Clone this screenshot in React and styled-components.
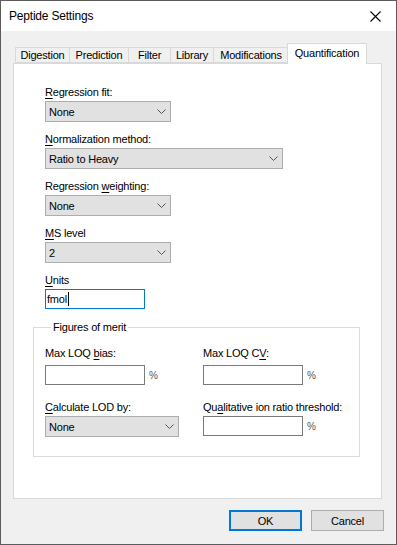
import React from 'react';
import styled, { createGlobalStyle } from 'styled-components';

const Global = createGlobalStyle`
  html, body {
    margin: 0;
    padding: 0;
    background: #ffffff;
  }
  * {
    box-sizing: border-box;
  }
`;

const Window = styled.div`
  width: 397px;
  height: 545px;
  border: 1px solid #5b5b5b;
  display: flex;
  flex-direction: column;
  font-family: 'Liberation Sans', Arial, sans-serif;
  font-size: 11px;
  letter-spacing: -0.2px;
  color: #000;
  background: #f0f0f0;
`;

const TitleBar = styled.div`
  height: 30px;
  background: #fff;
  display: flex;
  align-items: center;
  justify-content: space-between;
  padding: 0 15px 0 8px;
`;

const Title = styled.span`
  font-size: 12px;
  letter-spacing: -0.2px;
`;

const Body = styled.div`
  flex: 1;
  padding: 12px 0 0 12px;
  display: flex;
  flex-direction: column;
`;

const TabRow = styled.div`
  display: flex;
  align-items: flex-end;
  height: 20px;
  padding-left: 2px;
  position: relative;
  z-index: 1;
`;

const Tab = styled.div`
  width: ${p => p.w}px;
  height: ${p => (p.active ? 21 : 16)}px;
  margin: ${p => (p.active ? '0 -2px -1px -2px' : '0')};
  border: 1px solid #d9d9d9;
  border-left-width: ${p => (p.first || p.active ? 1 : 0)}px;
  border-bottom: ${p => (p.active ? 'none' : '1px solid #d9d9d9')};
  background: ${p => (p.active ? '#fff' : '#f0f0f0')};
  display: flex;
  align-items: ${p => (p.active ? 'flex-start' : 'center')};
  padding-top: ${p => (p.active ? 2 : 0)}px;
  justify-content: center;
  line-height: 14px;
`;

const Panel = styled.div`
  width: 369px;
  height: 436px;
  background: #fff;
  border: 1px solid #d9d9d9;
  padding: 21px 0 0 31px;
  display: flex;
  flex-direction: column;
`;

const Field = styled.div`
  display: flex;
  flex-direction: column;
  margin-bottom: ${p => (p.last ? 0 : 10)}px;
`;

const Label = styled.label`
  line-height: 15px;
  height: 15px;
  margin-bottom: ${p => p.gap || 1}px;
  white-space: nowrap;
  u {
    text-decoration-thickness: 1px;
    text-underline-offset: 2px;
  }
`;

const Combo = styled.div`
  width: ${p => p.w}px;
  height: 21px;
  background: #e1e1e1;
  border: 1px solid #adadad;
  display: flex;
  align-items: center;
  justify-content: space-between;
  padding: 0 4px 0 3px;
`;

const TextBox = styled.div`
  width: ${p => p.w || 100}px;
  height: 20px;
  background: #fff;
  border: 1px solid ${p => (p.focused ? '#0078d7' : '#7a7a7a')};
  display: flex;
  align-items: center;
  padding-left: 1px;
`;

const Caret = styled.span`
  display: inline-block;
  width: 1px;
  height: 14px;
  background: #000;
  margin-left: 1px;
`;

const Group = styled.fieldset`
  width: 327px;
  margin: 11px 0 0 -12px;
  padding: 11px 0 19px 11px;
  border: 1px solid #dcdcdc;
  display: grid;
  grid-template-columns: 158px 1fr;
  row-gap: 15px;
`;

const Legend = styled.legend`
  padding: 0 2px;
  margin-left: 6px;
  line-height: 15px;
`;

const Cell = styled.div`
  display: flex;
  flex-direction: column;
`;

const InputRow = styled.div`
  display: flex;
  align-items: center;
`;

const Percent = styled.span`
  font-size: 10px;
  color: #555;
  margin-left: 4px;
  margin-top: 1px;
`;

const Footer = styled.div`
  display: flex;
  justify-content: flex-end;
  gap: 9px;
  padding: 11px 12px 0 0;
`;

const Button = styled.div`
  width: 73px;
  height: 21px;
  background: #e1e1e1;
  border: ${p => (p.primary ? '2px solid #0078d7' : '1px solid #adadad')};
  display: flex;
  align-items: center;
  justify-content: center;
`;

const Chevron = () => (
  <svg width="9" height="5" viewBox="0 0 9 5">
    <polyline points="0.5,0.5 4.5,4.5 8.5,0.5" fill="none" stroke="#555" strokeWidth="1" />
  </svg>
);

const CloseIcon = () => (
  <svg width="11" height="11" viewBox="0 0 11 11">
    <path d="M0.5 0.5 L10.5 10.5 M10.5 0.5 L0.5 10.5" stroke="#000" strokeWidth="1.1" fill="none" />
  </svg>
);

const tabs = [
  { name: 'Digestion', w: 55 },
  { name: 'Prediction', w: 59 },
  { name: 'Filter', w: 42 },
  { name: 'Library', w: 43 },
  { name: 'Modifications', w: 75 },
  { name: 'Quantification', w: 80, active: true },
];

const Select = ({ w, value }) => (
  <Combo w={w}>
    <span>{value}</span>
    <Chevron />
  </Combo>
);

const App = () => {
  return (
    <Window>
      <Global />
      <TitleBar>
        <Title>Peptide Settings</Title>
        <CloseIcon />
      </TitleBar>
      <Body>
        <TabRow>
          {tabs.map((t, i) => (
            <Tab key={t.name} w={t.w} active={t.active} first={i === 0}>
              {t.name}
            </Tab>
          ))}
        </TabRow>
        <Panel>
          <Field>
            <Label><u>R</u>egression fit:</Label>
            <Select w={126} value="None" />
          </Field>
          <Field>
            <Label><u>N</u>ormalization method:</Label>
            <Select w={238} value="Ratio to Heavy" />
          </Field>
          <Field>
            <Label>Regression <u>w</u>eighting:</Label>
            <Select w={126} value="None" />
          </Field>
          <Field>
            <Label><u>M</u>S level</Label>
            <Select w={126} value="2" />
          </Field>
          <Field last>
            <Label><u>U</u>nits</Label>
            <TextBox focused>
              fmol<Caret />
            </TextBox>
          </Field>
          <Group>
            <Legend>Figures of merit</Legend>
            <Cell>
              <Label gap={4}>Max LOQ <u>b</u>ias:</Label>
              <InputRow>
                <TextBox />
                <Percent>%</Percent>
              </InputRow>
            </Cell>
            <Cell>
              <Label gap={4}>Max LOQ C<u>V</u>:</Label>
              <InputRow>
                <TextBox />
                <Percent>%</Percent>
              </InputRow>
            </Cell>
            <Cell>
              <Label><u>C</u>alculate LOD by:</Label>
              <Select w={134} value="None" />
            </Cell>
            <Cell>
              <Label>Qu<u>a</u>litative ion ratio threshold:</Label>
              <InputRow>
                <TextBox />
                <Percent>%</Percent>
              </InputRow>
            </Cell>
          </Group>
        </Panel>
        <Footer>
          <Button primary>OK</Button>
          <Button>Cancel</Button>
        </Footer>
      </Body>
    </Window>
  );
};

export default App;
